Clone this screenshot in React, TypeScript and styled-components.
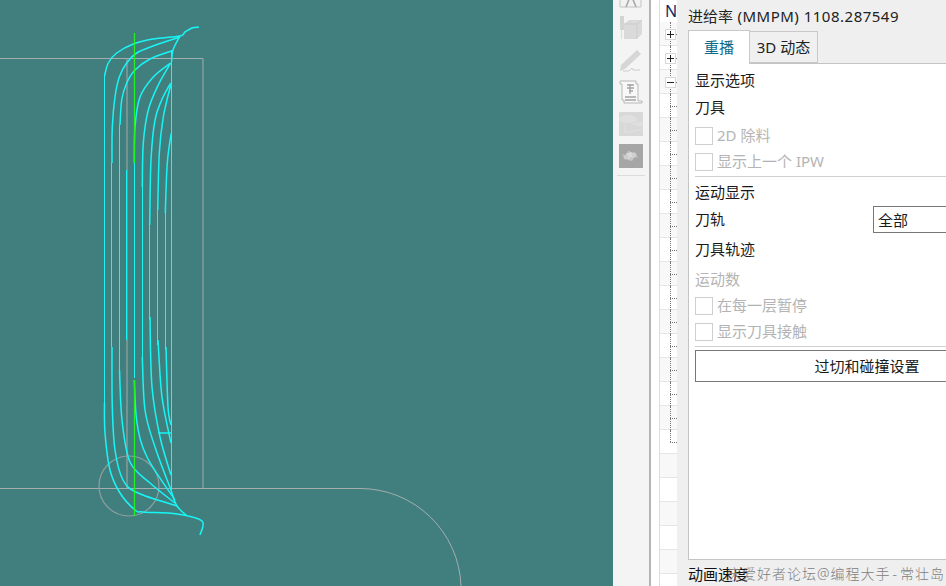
import styled, { createGlobalStyle } from 'styled-components';

const GlobalStyle = createGlobalStyle`
  html, body {
    margin: 0;
    padding: 0;
    background: #f0f0f0;
  }
`;

const Window = styled.div`
  position: relative;
  width: 946px;
  height: 586px;
  overflow: hidden;
  display: flex;
  font-family: 'Noto Sans', 'Noto Sans CJK SC', sans-serif;
  font-size: 15px;
  color: #1a1a1a;
`;

const Viewport = styled.div`
  flex: none;
  width: 613px;
  height: 586px;
  background: #417f7f;
`;

const ViewportDrawing = styled.svg`
  display: block;
`;

const Toolbar = styled.div`
  flex: none;
  width: 36px;
  height: 586px;
  background: #f4f4f4;
  border-right: 2px solid #b4b4b4;
  display: flex;
  flex-direction: column;
  align-items: center;
  gap: 8px;
  overflow: hidden;
`;

const ToolIcon = styled.svg<{ $first?: boolean }>`
  flex: none;
  display: block;
  margin-top: ${(p) => (p.$first ? '-16px' : '0')};
  filter: blur(0.5px);
`;

const ToolSeparator = styled.div`
  flex: none;
  width: 28px;
  height: 1px;
  background: #dcdcdc;
  margin-top: -1px;
`;

const Gutter = styled.div`
  flex: none;
  width: 8px;
  background: #fff;
  border-right: 1px solid #dddddd;
`;

const Tree = styled.div`
  flex: none;
  width: 17px;
  background: #fff;
  display: flex;
  flex-direction: column;
`;

const TreeHeader = styled.div`
  flex: none;
  height: 22px;
  padding-left: 5px;
  line-height: 22px;
  font-size: 16px;
  color: #0b2a6b;
  overflow: hidden;
`;

const TreeRow = styled.div<{ $shaded: boolean; $dotted: boolean; $last: boolean }>`
  position: relative;
  flex: none;
  height: 24px;
  box-sizing: border-box;
  border-bottom: 1px solid #e6e6e6;
  background: ${(p) => (p.$shaded ? '#f8f8f8' : '#fff')};

  &::before {
    content: ${(p) => (p.$dotted ? "''" : 'none')};
    position: absolute;
    left: 10px;
    top: 0;
    height: ${(p) => (p.$last ? '12px' : '24px')};
    border-left: 1px dotted #777;
  }

  &::after {
    content: ${(p) => (p.$dotted ? "''" : 'none')};
    position: absolute;
    left: 10px;
    top: 12px;
    width: 7px;
    border-top: 1px dotted #777;
  }
`;

const Expander = styled.div<{ $open: boolean }>`
  position: absolute;
  z-index: 1;
  left: 5px;
  top: 7px;
  width: 9px;
  height: 9px;
  background: #fff;
  border: 1px solid #d8d8d8;

  &::before {
    content: '';
    position: absolute;
    left: 1px;
    top: 4px;
    width: 7px;
    height: 1px;
    background: #222;
  }

  &::after {
    content: ${(p) => (p.$open ? 'none' : "''")};
    position: absolute;
    left: 4px;
    top: 1px;
    width: 1px;
    height: 7px;
    background: #222;
  }
`;

const Panel = styled.div`
  flex: none;
  width: 400px;
  height: 586px;
  box-sizing: border-box;
  background: #efefef;
  padding-left: 11px;
  display: flex;
  flex-direction: column;
`;

const FeedRate = styled.div`
  height: 30px;
  line-height: 32px;
  white-space: nowrap;
  color: #222;
`;

const FeedValue = styled.span`
  letter-spacing: 0.5px;
`;

const Tabs = styled.div`
  position: relative;
  z-index: 1;
  height: 34px;
  display: flex;
  align-items: flex-end;
`;

const Tab = styled.div<{ $active?: boolean }>`
  box-sizing: border-box;
  display: flex;
  align-items: center;
  justify-content: center;
  padding-bottom: 2px;
  height: ${(p) => (p.$active ? '34px' : '32px')};
  width: ${(p) => (p.$active ? '62px' : '68px')};
  margin-bottom: ${(p) => (p.$active ? '0' : '1px')};
  background: ${(p) => (p.$active ? '#fff' : '#f0f0f0')};
  color: ${(p) => (p.$active ? '#0a6a8c' : '#222')};
  border: 1px solid #c8c8c8;
  border-bottom: ${(p) => (p.$active ? 'none' : '1px solid #c8c8c8')};
  border-left: ${(p) => (p.$active ? '1px solid #c8c8c8' : 'none')};
`;

const Pane = styled.div`
  margin-top: -1px;
  width: 358px;
  height: 497px;
  box-sizing: border-box;
  flex: none;
  background: #fff;
  border: 1px solid #c4c4c4;
  padding: 4px 6px 0;
  display: flex;
  flex-direction: column;
`;

const Row = styled.div<{ $h: number; $disabled?: boolean; $top?: number }>`
  flex: none;
  display: flex;
  align-items: center;
  box-sizing: border-box;
  height: ${(p) => p.$h}px;
  padding-top: ${(p) => p.$top ?? 0}px;
  color: ${(p) => (p.$disabled ? '#b4b4b4' : '#1a1a1a')};
  white-space: nowrap;
`;

// the glyphs sit low in their line box, pull them up to the row's centre
const RowText = styled.span`
  margin-bottom: 4px;
`;

const RowLabel = styled.div`
  flex: none;
  width: 178px;
  margin-bottom: 2px;
`;

const CheckBox = styled.div`
  flex: none;
  width: 18px;
  height: 18px;
  box-sizing: border-box;
  margin-right: 4px;
  background: #fff;
  border: 1px solid #cfcfcf;
`;

const Separator = styled.div`
  flex: none;
  height: 1px;
  margin-top: 1px;
  background: #d0d0d0;
`;

const SelectBox = styled.div`
  flex: none;
  width: 200px;
  height: 27px;
  box-sizing: border-box;
  padding-left: 4px;
  line-height: 26px;
  border: 1px solid #777;
`;

const WideButton = styled.div`
  flex: none;
  margin-top: 3px;
  height: 32px;
  width: 344px;
  box-sizing: border-box;
  display: flex;
  align-items: center;
  justify-content: center;
  padding-bottom: 2px;
  background: #fff;
  border: 1px solid #777;
`;

const SpeedLabel = styled.div`
  height: 26px;
  line-height: 28px;
  color: #111;
`;

const Watermark = styled.div`
  position: absolute;
  left: 727px;
  top: 565px;
  font-size: 14px;
  font-weight: 300;
  line-height: 18px;
  letter-spacing: 1px;
  color: #808080;
  white-space: nowrap;
`;

const WatermarkDash = styled.span`
  margin: 0 2px;
`;

const cyan = '#19f5f5';

type Pt = [number, number];

// catmull-rom through the points, good enough for the toolpath curves
function smooth(pts: Pt[]): string {
  let d = `M${pts[0][0]} ${pts[0][1]}`;
  for (let i = 0; i < pts.length - 1; i++) {
    const p0 = pts[Math.max(i - 1, 0)];
    const p1 = pts[i];
    const p2 = pts[i + 1];
    const p3 = pts[Math.min(i + 2, pts.length - 1)];
    const c1x = p1[0] + (p2[0] - p0[0]) / 6;
    const c1y = p1[1] + (p2[1] - p0[1]) / 6;
    const c2x = p2[0] - (p3[0] - p1[0]) / 6;
    const c2y = p2[1] - (p3[1] - p1[1]) / 6;
    d += ` C${c1x.toFixed(1)} ${c1y.toFixed(1)} ${c2x.toFixed(1)} ${c2y.toFixed(1)} ${p2[0]} ${p2[1]}`;
  }
  return d;
}

const topCurves: Pt[][] = [
  [[104.5, 76], [108.3, 63], [116.7, 53], [133.3, 44], [153, 39], [180, 36], [185, 32], [192, 28], [199, 27]],
  [[112, 163], [112.3, 127], [115, 97], [119.3, 77], [126.7, 63], [136.7, 53], [153, 46], [180, 37]],
  [[120, 125], [121.7, 100], [126.7, 83], [135, 70], [150, 59], [171.7, 51]],
  [[134.3, 163], [135, 127], [140, 97], [153.3, 77], [170.7, 63]],
  [[142.3, 187], [143.3, 143], [148.3, 110], [158.3, 85], [170.7, 63]],
  [[149.7, 225], [151, 160], [155, 120], [161.7, 100], [170.7, 83]],
  [[157.7, 210], [159.3, 153], [163.3, 117], [170.7, 85]],
  [[165.3, 213], [167.3, 163], [171.3, 133]],
  [[180, 36], [173, 50], [171.5, 62]],
];

const bottomCurves: Pt[][] = [
  [[104.5, 403], [105, 433], [110, 470], [120, 493], [135, 510], [143, 512], [177, 514], [202, 521], [200, 535]],
  [[112, 347], [112.3, 407], [115, 450], [123, 480], [138, 493], [177, 506]],
  [[119.5, 370], [122, 420], [130, 462], [150, 483], [175, 503]],
  [[134.3, 380], [137, 423], [147, 457], [175, 500]],
  [[142.3, 357], [145, 410], [155, 447], [171, 490]],
  [[150, 317], [152, 387], [160, 437], [171, 475]],
  [[158, 340], [162, 397], [171, 443]],
  [[166, 347], [168, 407], [171, 425]],
  [[171, 490], [177, 506], [187, 516]],
  [[158, 433], [171, 433]],
];

function ToolpathDrawing() {
  return (
    <ViewportDrawing width="613" height="586" viewBox="0 0 613 586">
      <g fill="none" stroke="#a4aeae" strokeWidth="1">
        <path d="M0 58.5H203" />
        <path d="M0 488.5H360A101 101 0 0 1 461 586" />
        <circle cx="129" cy="486" r="30" stroke="#8f9d9d" strokeWidth="1.2" />
      </g>
      <path d="M127 58.5V488M203 58.5V488" fill="none" stroke="#8b9d9d" strokeWidth="1.4" />
      <g fill="none" stroke={cyan}>
        <path d="M104.5 76V405M111.5 163V347M119.5 125V370M126.5 170V340M134.5 163V378M142.5 187V360M149.5 225V320M157.5 210V345M165.5 213V350M171.5 50V490" />
        <g strokeWidth="1.5">
          {[...topCurves, ...bottomCurves].map((pts, i) => (
            <path key={i} d={smooth(pts)} />
          ))}
        </g>
      </g>
      <path d="M134.5 33V163M134.5 380V516" stroke="#22f022" strokeWidth="1.3" fill="none" />
    </ViewportDrawing>
  );
}

function ToolButtons() {
  return (
    <>
      <ToolIcon $first width="24" height="24" viewBox="0 0 24 24">
        <path d="M1 1h21v22H1z" fill="#f2f2f2" stroke="#c4c4c4" />
        <path d="M7 23l4-10h2l4 10" fill="none" stroke="#a8a8a8" strokeWidth="1.6" />
      </ToolIcon>
      <ToolIcon width="24" height="24" viewBox="0 0 24 24">
        <rect x="1" y="0" width="4" height="14" fill="#d4d4d4" />
        <rect x="2" y="14" width="1" height="9" fill="#dcdcdc" />
        <path d="M5 8l5-4h13v14l-5 5H5z" fill="#dadada" />
        <path d="M5 8h13v15M18 8l5-4" fill="none" stroke="#cccccc" />
      </ToolIcon>
      <ToolIcon width="24" height="24" viewBox="0 0 24 24">
        <path d="M2 17L18 2l4 4L6 21l-5 2z" fill="#d6d6d6" />
        <path d="M4 23h6l3-3 1 2h7" fill="none" stroke="#cccccc" />
      </ToolIcon>
      <ToolIcon width="24" height="24" viewBox="0 0 24 24">
        <path d="M1 1h16v3h2v17h4v2H5v-3H3V4H1z" fill="#f8f8f8" stroke="#b8b8b8" />
        <path d="M8 5h7M8 8h7M10 11h4M6 17h11M6 20h11M11 4v10" stroke="#a4a4a4" strokeWidth="1.3" />
      </ToolIcon>
      <ToolIcon width="24" height="24" viewBox="0 0 24 24">
        <rect width="24" height="24" fill="#d8d8d8" />
        <ellipse cx="9" cy="7" rx="9" ry="4" fill="#e0e0e0" />
        <path d="M6 12v9l18-4" fill="none" stroke="#e2e2e2" />
        <path d="M10 12l14-3v6z" fill="#dedede" />
      </ToolIcon>
      <ToolIcon width="24" height="24" viewBox="0 0 24 24">
        <rect width="24" height="24" fill="#a6a6a6" />
        <circle cx="11" cy="12" r="4" fill="#dadada" />
        <circle cx="7" cy="13" r="2.5" fill="#cccccc" />
        <circle cx="15" cy="11" r="2.5" fill="#d0d0d0" />
        <circle cx="12" cy="15" r="2" fill="#c6c6c6" />
        <circle cx="18" cy="13" r="1" fill="#bcbcbc" />
        <circle cx="4" cy="11" r="1" fill="#bcbcbc" />
        <circle cx="10" cy="8" r="1.2" fill="#c4c4c4" />
      </ToolIcon>
      <ToolSeparator />
    </>
  );
}

function TreeColumn() {
  const rows = Array.from({ length: 24 }, (_, i) => i);
  return (
    <Tree>
      <TreeHeader>N</TreeHeader>
      {rows.map((i) => (
        <TreeRow key={i} $shaded={i % 2 === 0} $dotted={i < 18} $last={i === 17}>
          {i < 3 && <Expander $open={i === 2} />}
        </TreeRow>
      ))}
    </Tree>
  );
}

export default function App() {
  return (
    <>
      <GlobalStyle />
      <Window>
        <Viewport>
          <ToolpathDrawing />
        </Viewport>
        <Toolbar>
          <ToolButtons />
        </Toolbar>
        <Gutter />
        <TreeColumn />
        <Panel>
          <FeedRate>
            进给率<FeedValue> (MMPM) 1108.287549</FeedValue>
          </FeedRate>
          <Tabs>
            <Tab $active>重播</Tab>
            <Tab>3D 动态</Tab>
          </Tabs>
          <Pane>
            <Row $h={26}><RowText>显示选项</RowText></Row>
            <Row $h={28}><RowText>刀具</RowText></Row>
            <Row $h={1} />
            <Row $h={26} $disabled>
              <CheckBox />
              <RowText>2D 除料</RowText>
            </Row>
            <Row $h={26} $disabled>
              <CheckBox />
              <RowText>显示上一个 IPW</RowText>
            </Row>
            <Separator />
            <Row $h={29} $top={3}><RowText>运动显示</RowText></Row>
            <Row $h={27}>
              <RowLabel>刀轨</RowLabel>
              <SelectBox>全部</SelectBox>
            </Row>
            <Row $h={35}><RowText>刀具轨迹</RowText></Row>
            <Row $h={25} $disabled><RowText>运动数</RowText></Row>
            <Row $h={26} $disabled>
              <CheckBox />
              <RowText>在每一层暂停</RowText>
            </Row>
            <Row $h={26} $disabled>
              <CheckBox />
              <RowText>显示刀具接触</RowText>
            </Row>
            <Separator />
            <WideButton>过切和碰撞设置</WideButton>
          </Pane>
          <SpeedLabel>动画速度</SpeedLabel>
        </Panel>
        <Watermark>
          床爱好者论坛@编程大手<WatermarkDash>-</WatermarkDash>常壮岛
        </Watermark>
      </Window>
    </>
  );
}
